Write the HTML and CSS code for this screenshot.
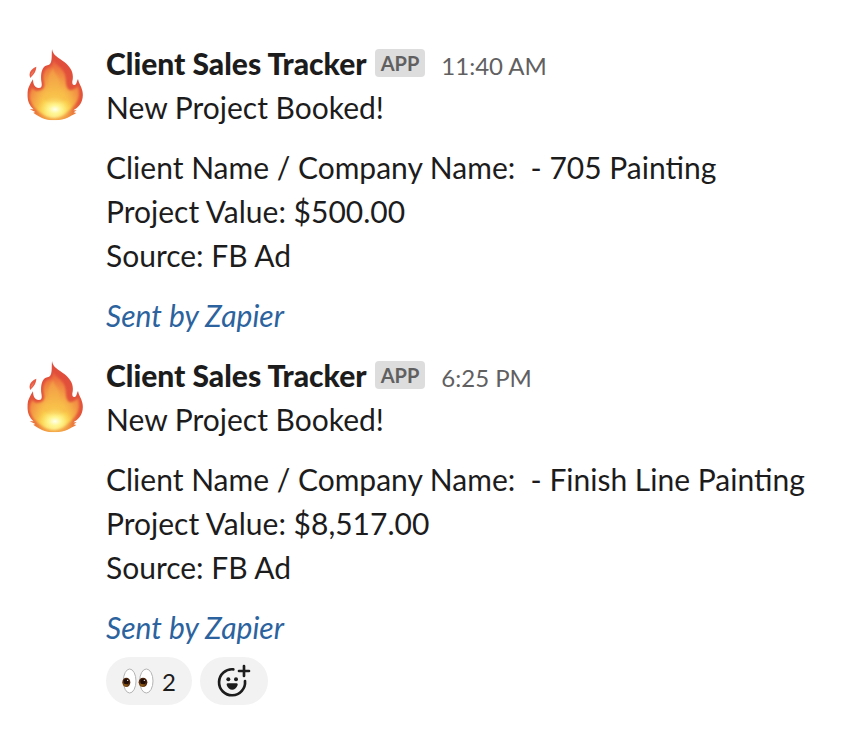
FILE: index.html
```html
<!DOCTYPE html>
<html lang="en">
	<head>
		<meta charset="UTF-8" />
		<meta name="viewport" content="width=device-width, initial-scale=1.0" />
		<title>Client Sales Tracker</title>
		<link rel="stylesheet" href="styles.css">
	</head>
	<body>
		<!-- Shared shapes -->
		<svg class="shapes" width="0" height="0" aria-hidden="true">
			<defs>
				<radialGradient id="flame-fill" gradientUnits="userSpaceOnUse" cx="116" cy="218" r="165" gradientTransform="translate(116 218) scale(0.72 1) translate(-116 -218)">
					<stop offset="0" stop-color="#fffbd8" />
					<stop offset="0.13" stop-color="#fff08a" />
					<stop offset="0.32" stop-color="#fbce4b" />
					<stop offset="0.56" stop-color="#f4a345" />
					<stop offset="0.82" stop-color="#ee7440" />
					<stop offset="1" stop-color="#e5533b" />
				</radialGradient>
				<radialGradient id="glow-fill">
					<stop offset="0" stop-color="#fffff0" />
					<stop offset="0.35" stop-color="#fff68f" stop-opacity="0.9" />
					<stop offset="1" stop-color="#fbd34b" stop-opacity="0" />
				</radialGradient>
				<linearGradient id="edge-fill" x1="0" y1="0" x2="0" y2="1">
					<stop offset="0" stop-color="#df4c3c" />
					<stop offset="0.75" stop-color="#e4553a" />
					<stop offset="1" stop-color="#f29a3e" />
				</linearGradient>
				<radialGradient id="iris-fill" cx="0.4" cy="0.7">
					<stop offset="0" stop-color="#a26a16" />
					<stop offset="1" stop-color="#4b230d" />
				</radialGradient>
				<filter id="soft">
					<feGaussianBlur stdDeviation="3" />
				</filter>
				<clipPath id="flame-edge">
					<path d="M108 27C111 47 128 53 145 66C164 81 175 99 169 124C168 134 172 137 178 134C183 130 182 122 186 117C188 130 196 139 199 152C203 168 199 184 191 195C185 203 178 207 172 211L182 211L173 217L181 219C164 228 149 240 117 241C84 241 68 229 52 218L58 216L41 208L53 208C41 197 34 182 34 164C34 145 42 133 51 118C51 133 57 144 68 144C79 144 78 134 76 124C73 103 78 78 94 76C111 74 106 48 108 27Z" />
				</clipPath>
				<symbol id="flame" viewBox="6 27 216 216">
					<g clip-path="url(#flame-edge)">
						<rect fill="url(#edge-fill)" x="30" y="27" width="174" height="216" />
						<path fill="url(#flame-fill)" filter="url(#soft)" d="M112 58C116 73 133 80 142 94C154 113 146 128 154 144C161 156 174 150 186 139C192 157 190 176 180 190C171 205 157 213 145 223C126 237 98 236 80 223C61 210 48 199 42 179C38 164 43 154 49 143C54 151 62 155 72 151C88 147 86 135 83 121C80 101 86 87 100 82C110 79 112 68 112 58Z" />
						<path fill="#f6b54c" opacity="0.5" filter="url(#soft)" d="M111 85C98 101 93 116 99 133C103 147 91 164 82 174C92 194 143 195 155 174C136 163 126 151 131 132C134 118 120 108 111 85Z" />
						<ellipse fill="url(#glow-fill)" cx="117" cy="208" rx="56" ry="38" />
					</g>
					<path fill="#e75a43" d="M61 80C47 86 36 97 43 114C49 106 60 99 61 80Z" />
					<path fill="#ed765b" d="M54 92C47 96 43 102 45 107C49 103 53 98 54 92Z" />
				</symbol>
			</defs>
		</svg>

		<main class="channel">
			<article class="message">
				<svg class="avatar" role="img" aria-label="Fire"><use href="#flame" /></svg>
				<div class="content">
					<header class="message-header">
						<span class="sender">Client Sales Tracker</span>
						<span class="app-badge">APP</span>
						<time class="time">11:40 AM</time>
					</header>
					<p>New Project Booked!</p>
					<p class="details">Client Name / Company Name:&nbsp; - 705 Painting<br>Project Value: $500.00<br>Source: FB Ad</p>
					<a class="sent-by" href="#">Sent by Zapier</a>
				</div>
			</article>

			<article class="message">
				<svg class="avatar" role="img" aria-label="Fire"><use href="#flame" /></svg>
				<div class="content">
					<header class="message-header">
						<span class="sender">Client Sales Tracker</span>
						<span class="app-badge">APP</span>
						<time class="time">6:25 PM</time>
					</header>
					<p>New Project Booked!</p>
					<p class="details">Client Name / Company Name:&nbsp; - Finish Line Painting<br>Project Value: $8,517.00<br>Source: FB Ad</p>
					<a class="sent-by" href="#">Sent by Zapier</a>
					<div class="reactions">
						<button class="reaction" type="button" aria-label="Eyes reaction, 2">
							<svg class="eyes" viewBox="67 52 96 78" aria-hidden="true">
								<g fill="#fff" stroke="#b4b4b4" stroke-width="3">
									<ellipse cx="90" cy="91" rx="19" ry="36" />
									<ellipse cx="140" cy="91" rx="20" ry="36" />
								</g>
								<ellipse fill="url(#iris-fill)" cx="80" cy="95" rx="12" ry="14" />
								<ellipse fill="url(#iris-fill)" cx="130" cy="95" rx="13" ry="14" />
								<circle fill="#200d08" cx="80" cy="93" r="8" />
								<circle fill="#200d08" cx="130" cy="93" r="8" />
								<circle fill="#fff" cx="84" cy="89" r="2" />
								<circle fill="#fff" cx="134" cy="89" r="2" />
							</svg>
							<span>2</span>
						</button>
						<button class="reaction" type="button" aria-label="Add reaction">
							<svg class="add-icon" viewBox="51 42 102 102" aria-hidden="true">
								<g fill="none" stroke="#1d1c1d" stroke-width="8" stroke-linecap="round">
									<path d="M100 58A39 39 0 1 0 135 93" />
									<path d="M132 48V78M117 63H147" />
								</g>
								<g fill="#1d1c1d">
									<circle cx="85" cy="88" r="6" />
									<circle cx="108" cy="88" r="6" />
									<path d="M83 100H110Q114 100 113 105C107 124 86 124 80 105Q79 100 83 100Z" />
								</g>
							</svg>
						</button>
					</div>
				</div>
			</article>
		</main>
	</body>
</html>
```
FILE: styles.css
```css
* {
	margin: 0;
	padding: 0;
	box-sizing: border-box;
}
body {
	background-color: #fff;
	color: #1d1c1d;
	font-family: Lato, sans-serif;
	font-size: 30px;
	line-height: 44px;
}
.shapes {
	display: block;
}
.channel {
	padding: 33px 18px;
}
.message {
	display: flex;
	align-items: flex-start;
	gap: 16px;
	padding: 8px 0;
}
.avatar {
	flex: none;
	width: 72px;
	height: 72px;
	margin-top: 8px;
}
.content {
	flex: 1;
	min-width: 0;
}
.message-header {
	display: flex;
	align-items: baseline;
}
.sender {
	font-family: "Lato Black", Lato, sans-serif;
	font-weight: 900;
}
.app-badge {
	align-self: center;
	margin-left: 8px;
	padding: 0 6px;
	border-radius: 4px;
	background-color: #dddddd;
	color: #616061;
	font-size: 20px;
	font-weight: 700;
	line-height: 28px;
}
.time {
	margin-left: 16px;
	color: #616061;
	font-size: 24px;
	line-height: 28px;
}
.details {
	margin: 16px 0;
}
.sent-by {
	display: block;
	color: #2c639e;
	font-style: italic;
	text-decoration: none;
}
.reactions {
	display: flex;
	flex-wrap: wrap;
	gap: 8px;
	margin-top: 8px;
}
.reaction {
	display: flex;
	align-items: center;
	gap: 8px;
	height: 48px;
	padding: 0 16px;
	border: none;
	border-radius: 24px;
	background-color: #f2f2f2;
	color: #1d1c1d;
	font-family: inherit;
	font-size: 24px;
	cursor: pointer;
}
.eyes {
	width: 32px;
	height: 26px;
}
.add-icon {
	width: 36px;
	height: 34px;
}
```
